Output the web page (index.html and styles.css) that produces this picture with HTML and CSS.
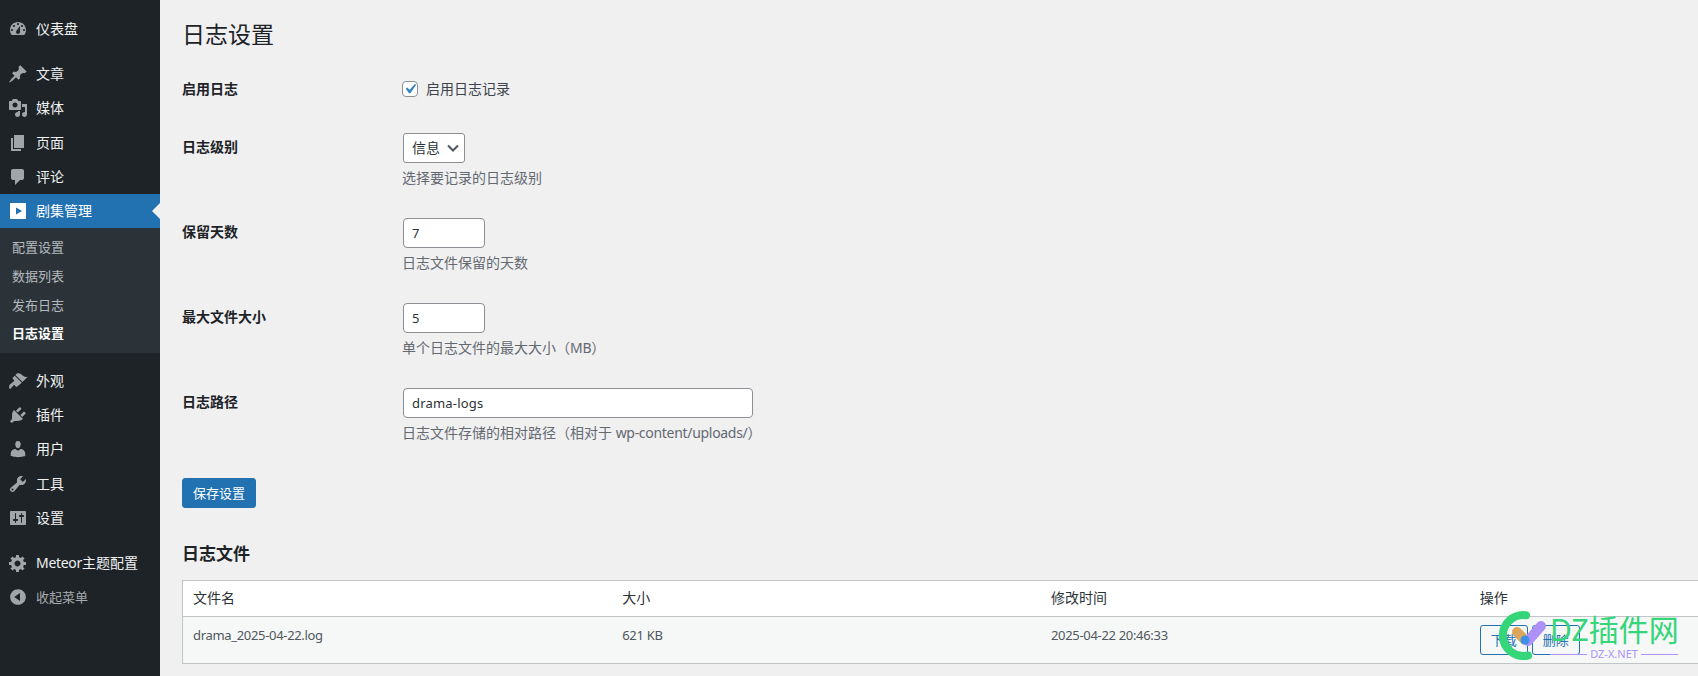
FILE: index.html
```html
<!DOCTYPE html>
<html lang="zh-CN">
<head>
<meta charset="utf-8">
<title>日志设置</title>
<link rel="stylesheet" href="styles.css">
</head>
<body>
<div class="shell">
  <nav class="sidebar">
    <ul class="menu">
      <li class="item"><svg class="ico" viewBox="0 0 20 20"><path fill-rule="evenodd" d="M3.76 16h12.48c1.1-1.37 1.76-3.11 1.76-5 0-4.42-3.58-8-8-8s-8 3.58-8 8c0 1.89.66 3.63 1.76 5zM10 4c.55 0 1 .45 1 1s-.45 1-1 1-1-.45-1-1 .45-1 1-1zM6 6c.55 0 1 .45 1 1s-.45 1-1 1-1-.45-1-1 .45-1 1-1zm8 0c.55 0 1 .45 1 1s-.45 1-1 1-1-.45-1-1 .45-1 1-1zm-5.37 5.55L12 7v6c0 1.1-.9 2-2 2s-2-.9-2-2c0-.57.24-1.08.63-1.45zM4 10c.55 0 1 .45 1 1s-.45 1-1 1-1-.45-1-1 .45-1 1-1zm12 0c.55 0 1 .45 1 1s-.45 1-1 1-1-.45-1-1 .45-1 1-1z"/></svg><span>仪表盘</span></li>
      <li class="sep"></li>
      <li class="item"><svg class="ico" viewBox="0 0 20 20"><path d="M10.44 3.02l1.82-1.82 6.36 6.35-1.83 1.82c-1.05-.68-2.48-.57-3.41.36l-.75.75c-.92.93-1.04 2.35-.35 3.41l-1.83 1.82-2.41-2.41-2.8 2.79c-.42.42-3.38 2.71-3.8 2.29s1.86-3.39 2.28-3.81l2.79-2.79L4.1 9.36l1.83-1.82c1.05.69 2.48.57 3.4-.36l.75-.75c.93-.92 1.05-2.35.36-3.41z"/></svg><span>文章</span></li>
      <li class="item"><svg class="ico" viewBox="0 0 20 20"><path fill-rule="evenodd" d="M13 11V4c0-.55-.45-1-1-1h-1.67L9 1H5L3.67 3H2c-.55 0-1 .45-1 1v7c0 .55.45 1 1 1h10c.55 0 1-.45 1-1zM7 4.5c1.38 0 2.5 1.12 2.5 2.5S8.38 9.5 7 9.5 4.5 8.38 4.5 7 5.62 4.5 7 4.5zM14 6h5v10.5c0 1.38-1.12 2.5-2.5 2.5S14 17.88 14 16.5s1.12-2.5 2.5-2.5c.17 0 .34.02.5.05V9h-3V6zm-4 8.05V13h2v3.5c0 1.38-1.12 2.5-2.5 2.5S7 17.88 7 16.5 8.12 14 9.5 14c.17 0 .34.02.5.05z"/></svg><span>媒体</span></li>
      <li class="item"><svg class="ico" viewBox="0 0 20 20"><path d="M6 15V2h10v13H6zm-1 1h8v2H3V5h2v11z"/></svg><span>页面</span></li>
      <li class="item"><svg class="ico" viewBox="0 0 20 20"><path d="M5 2h9c1.1 0 2 .9 2 2v7c0 1.1-.9 2-2 2h-2l-5 5v-5H5c-1.1 0-2-.9-2-2V4c0-1.1.9-2 2-2z"/></svg><span>评论</span></li>
      <li class="item current"><svg class="ico" viewBox="0 0 20 20"><path fill-rule="evenodd" d="M3 2h14c.8 0 1 .3 1 1v14c0 .7-.2 1-1 1H3c-.8 0-1-.3-1-1V3c0-.7.2-1 1-1zm5 4.500v7l6-3.500z"/></svg><span>剧集管理</span></li>
      <li class="submenu">
        <a class="sub">配置设置</a>
        <a class="sub">数据列表</a>
        <a class="sub">发布日志</a>
        <a class="sub on">日志设置</a>
      </li>
      <li class="sep"></li>
      <li class="item"><svg class="ico" viewBox="0 0 20 20"><path d="M14.48 11.06L7.41 3.99l1.5-1.5c.5-.56 2.3-.47 3.51.32 1.21.8 1.43 1.28 2.91 2.1 1.18.64 2.45 1.26 4.45.85zm-.71.71L6.7 4.7 4.93 6.47c-.39.39-.39 1.02 0 1.41l1.06 1.06c.39.39.39 1.03 0 1.42-.6.6-1.43 1.11-2.21 1.69-.35.26-.7.53-1.01.84C1.43 13.23.65 15.3 1.39 17.6c.39.39 1.02.39 1.41 0 .31-.31.58-.66.84-1.01.58-.78 1.09-1.61 1.69-2.21.39-.39 1.03-.39 1.42 0l1.06 1.06c.39.39 1.02.39 1.41 0z"/></svg><span>外观</span></li>
      <li class="item"><svg class="ico" viewBox="0 0 20 20"><path d="M13.11 4.36L9.87 7.6 8 5.73l3.24-3.24c.35-.34 1.05-.2 1.56.32.52.51.66 1.21.31 1.55zm-8 1.77l.91-1.12 9.01 9.01-1.19.84c-.71.71-2.63 1.16-3.82 1.16H6.14L4.9 17.26c-.59.59-1.54.59-2.12 0-.59-.58-.59-1.53 0-2.12l1.24-1.24v-3.88c0-1.13.4-3.19 1.09-3.89zm7.26 3.97l3.24-3.24c.34-.35 1.04-.21 1.55.31.52.51.66 1.21.31 1.55l-3.24 3.25z"/></svg><span>插件</span></li>
      <li class="item"><svg class="ico" viewBox="0 0 20 20"><path d="M10 9.25c-2.27 0-2.73-3.44-2.73-3.44C7 4.02 7.82 2 9.97 2c2.16 0 2.98 2.02 2.71 3.81 0 0-.41 3.44-2.68 3.44zm0 2.57L12.72 10c2.39 0 4.52 2.33 4.52 4.530v2.490s-3.65 1.130-7.240 1.130c-3.650 0-7.240-1.130-7.240-1.130v-2.490c0-2.250 1.940-4.480 4.470-4.480z"/></svg><span>用户</span></li>
      <li class="item"><svg class="ico" viewBox="0 0 20 20"><path fill-rule="evenodd" d="M16.68 9.77c-1.34 1.34-3.3 1.67-4.95.99l-5.41 6.52c-.99.99-2.59.99-3.58 0s-.99-2.59 0-3.57l6.52-5.42c-.68-1.65-.35-3.61.99-4.95 1.28-1.28 3.12-1.62 4.72-1.06l-2.89 2.89 2.82 2.82 2.86-2.87c.53 1.58.18 3.39-1.08 4.65zM3.81 16.21c.4.39 1.04.39 1.43 0 .4-.4.4-1.04 0-1.43-.39-.4-1.03-.4-1.43 0-.39.39-.39 1.03 0 1.43z"/></svg><span>工具</span></li>
      <li class="item"><svg class="ico" viewBox="0 0 20 20"><path fill-rule="evenodd" d="M18 16V4c0-.55-.45-1-1-1H3c-.55 0-1 .45-1 1v12c0 .55.45 1 1 1h14c.55 0 1-.45 1-1zM8 11h1c.55 0 1 .45 1 1s-.45 1-1 1H8v1.500c0 .28-.22.5-.5.5s-.5-.22-.5-.5V13H6c-.55 0-1-.45-1-1s.45-1 1-1h1V5.500c0-.28.22-.5.5-.5s.5.22.5.5V11zm5-2h-1c-.55 0-1-.45-1-1s.45-1 1-1h1V5.500c0-.28.22-.5.5-.5s.5.22.5.5V7h1c.55 0 1 .45 1 1s-.45 1-1 1h-1v5.500c0 .28-.22.5-.5.5s-.5-.22-.5-.5V9z"/></svg><span>设置</span></li>
      <li class="sep"></li>
      <li class="item"><svg class="ico" viewBox="0 0 20 20"><path fill-rule="evenodd" d="M18 12h-2.180c-.17.7-.44 1.350-.81 1.930l1.540 1.540-2.100 2.100-1.540-1.540c-.58.36-1.230.63-1.910.79V19H8v-2.180c-.68-.16-1.330-.43-1.910-.79l-1.540 1.540-2.120-2.120 1.540-1.540c-.36-.58-.63-1.230-.79-1.910H1V9.030h2.170c.16-.7.44-1.350.8-1.940L2.430 5.550l2.100-2.100 1.540 1.540c.58-.37 1.240-.64 1.930-.81V2h3v2.180c.68.16 1.330.43 1.910.79l1.540-1.540 2.120 2.120-1.540 1.540c.36.59.64 1.240.8 1.940H18V12zm-8.500 1.500c1.660 0 3-1.340 3-3s-1.340-3-3-3-3 1.340-3 3 1.340 3 3 3z"/></svg><span><b class="latin">Meteor</b>主题配置</span></li>
      <li class="item collapse"><svg class="ico" viewBox="0 0 20 20"><path fill-rule="evenodd" d="M10 2.160c4.330 0 7.840 3.510 7.840 7.840s-3.510 7.840-7.840 7.840S2.160 14.330 2.160 10 5.710 2.160 10 2.160zm2 11.720V6.120L6.180 9.970z"/></svg><span>收起菜单</span></li>
    </ul>
  </nav>
  <main class="content">
    <h1 class="title">日志设置</h1>
    <table class="form">
      <tr>
        <th>启用日志</th>
        <td><label class="check"><span class="box"><svg viewBox="0 0 20 20"><path d="M14.830 4.890l1.340.94-5.810 8.380H9.020L5.780 9.670l1.340-1.250 2.570 2.400z"/></svg></span>启用日志记录</label></td>
      </tr>
      <tr>
        <th>日志级别</th>
        <td><div class="select">信息<svg viewBox="0 0 16 16"><path d="M3 5.500l5 5 5-5" fill="none" stroke="#50575e" stroke-width="2"/></svg></div><p class="desc">选择要记录的日志级别</p></td>
      </tr>
      <tr>
        <th>保留天数</th>
        <td><div class="input small">7</div><p class="desc">日志文件保留的天数</p></td>
      </tr>
      <tr>
        <th>最大文件大小</th>
        <td><div class="input small">5</div><p class="desc">单个日志文件的最大大小（<span class="latin">MB</span>）</p></td>
      </tr>
      <tr>
        <th>日志路径</th>
        <td><div class="input wide">drama-logs</div><p class="desc">日志文件存储的相对路径（相对于 <span class="latin">wp-content/uploads/</span>）</p></td>
      </tr>
    </table>
    <div class="btn primary">保存设置</div>
    <h2 class="sub-title">日志文件</h2>
    <table class="files">
      <thead>
        <tr><th>文件名</th><th>大小</th><th>修改时间</th><th>操作</th></tr>
      </thead>
      <tbody>
        <tr>
          <td>drama_2025-04-22.log</td>
          <td>621 KB</td>
          <td>2025-04-22 20:46:33</td>
          <td><div class="actions"><span class="btn outline">下载</span><span class="btn outline">删除</span></div></td>
        </tr>
      </tbody>
    </table>
  </main>
</div>
<div class="watermark">
  <svg class="wm-logo" viewBox="0 0 56 56">
    <path d="M30 7.200A20.500 20.500 0 1 0 32 47.500" fill="none" stroke="#35d57a" stroke-width="8" stroke-linecap="round"/>
    <path d="M21 24l8 8" stroke="#dba75c" stroke-width="10" stroke-linecap="round"/>
    <path d="M32 33l13-15" stroke="#ac92f8" stroke-width="10" stroke-linecap="round"/>
    <circle cx="29" cy="32" r="4.500" fill="#3c91e6"/>
  </svg>
  <div class="wm-text">
    <div class="wm-name">DZ插件网</div>
    <div class="wm-url"><i></i><span>DZ-X.NET</span><i></i></div>
  </div>
</div>
</body>
</html>
```
FILE: styles.css
```css
* { box-sizing: border-box; }
html, body { margin: 0; padding: 0; height: 100%; overflow: hidden; }
body {
  background: #f0f0f1;
  color: #3c434a;
  font-family: "Noto Sans", "Noto Sans CJK SC", sans-serif;
  font-size: 14px;
  line-height: 20px;
}
.latin { font-weight: inherit; letter-spacing: -.3px; }
.shell { display: flex; height: 676px; position: relative; }
.sidebar { flex: 0 0 160px; background: #1d2327; }
.menu { list-style: none; margin: 0; padding: 12px 0; }
.item {
  display: flex;
  align-items: center;
  height: 34.300px;
  padding-left: 8px;
  color: #f0f0f1;
  position: relative;
}
.item span { margin-left: 8px; white-space: nowrap; }
.ico { width: 20px; height: 20px; fill: #a0a5aa; flex: none; }
.sep { height: 10.500px; }
.current { background: #2271b1; color: #fff; }
.current .ico { fill: #fff; }
.current::after {
  content: "";
  position: absolute;
  right: 0;
  top: 9px;
  border: 8px solid transparent;
  border-right-color: #f0f0f1;
  border-left: 0;
}
.submenu { background: #2c3338; padding: 5px 0 5px; }
.sub {
  display: block;
  height: 28.700px;
  line-height: 28.700px;
  padding-left: 12px;
  font-size: 13px;
  color: rgba(240, 246, 252, .7);
}
.sub.on { color: #fff; font-weight: 700; }
.collapse { color: #a7aaad; font-size: 13px; }
.content { flex: 1; min-width: 0; padding: 0 0 0 22px; }
.title {
  margin: 0;
  padding: 20px 0 11px;
  font-size: 23px;
  line-height: 29px;
  font-weight: 400;
  color: #1d2327;
}
.form { border-collapse: collapse; width: 800px; }
.form th {
  width: 220px;
  text-align: left;
  vertical-align: top;
  padding: 20px 10px 20px 0;
  font-weight: 600;
  color: #1d2327;
  line-height: 17px;
}
.form td { vertical-align: top; padding: 15px 0; }
.check { display: flex; align-items: center; margin: 4px 0; }
.box {
  width: 16px;
  height: 16px;
  border: 1px solid #8c8f94;
  border-radius: 4px;
  background: #fff;
  margin-right: 8px;
  flex: none;
}
.box svg { display: block; width: 20px; height: 20px; margin: -3px; fill: #3582c4; }
.select {
  display: flex;
  align-items: center;
  justify-content: space-between;
  width: 62px;
  height: 30px;
  margin-left: 1px;
  padding: 0 3px 0 8px;
  border: 1px solid #8c8f94;
  border-radius: 3px;
  background: #fff;
  color: #2c3338;
}
.select svg { width: 16px; height: 16px; }
.input {
  height: 30px;
  margin-left: 1px;
  padding: 0 8px;
  border: 1px solid #8c8f94;
  border-radius: 4px;
  background: #fff;
  color: #2c3338;
  font-size: 13px;
  letter-spacing: .2px;
  line-height: 28px;
}
.small { width: 82px; }
.wide { width: 350px; }
.desc { margin: 5px 0 0; color: #646970; line-height: 20px; }
.btn {
  display: inline-block;
  height: 30px;
  border-radius: 3px;
  font-size: 13px;
  line-height: 28px;
  padding: 0 10px;
  border: 1px solid #2271b1;
}
.primary { background: #2271b1; color: #fff; margin-top: 20px; }
.outline { color: #2271b1; background: #f6f7f7; width: 48px; text-align: center; padding: 0; }
.sub-title {
  margin: 35px 0 15px;
  font-size: 17px;
  line-height: 22px;
  font-weight: 600;
  color: #1d2327;
}
.files {
  border-collapse: collapse;
  table-layout: fixed;
  width: 1716px;
  background: #fff;
  border: 1px solid #c3c4c7;
}
.files th {
  text-align: left;
  font-weight: 400;
  padding: 7px 10px 8px;
  color: #2c3338;
  border-bottom: 1px solid #c3c4c7;
  height: 36px;
}
.files th:nth-child(n+2), .files td:nth-child(n+2) { padding-left: 11px; }
.files td {
  vertical-align: top;
  padding: 8px 10px;
  height: 46px;
  background: #f6f7f7;
  font-size: 13px;
  letter-spacing: -.32px;
  color: #50575e;
}
.actions { display: flex; gap: 4px; letter-spacing: 0; }
.watermark {
  position: absolute;
  left: 1496px;
  top: 608px;
  display: flex;
}
.wm-logo { width: 56px; height: 56px; margin-right: -2px; }
.wm-text { width: 128px; }
.wm-name {
  font-size: 30px;
  line-height: 34px;
  color: #35d57a;
  white-space: nowrap;
  margin-top: 5px;
}
.wm-url {
  display: flex;
  align-items: center;
  gap: 3px;
  font-size: 11px;
  line-height: 14px;
  color: #ac92f8;
}
.wm-url i { flex: 1; height: 1px; background: #ac92f8; }
```
